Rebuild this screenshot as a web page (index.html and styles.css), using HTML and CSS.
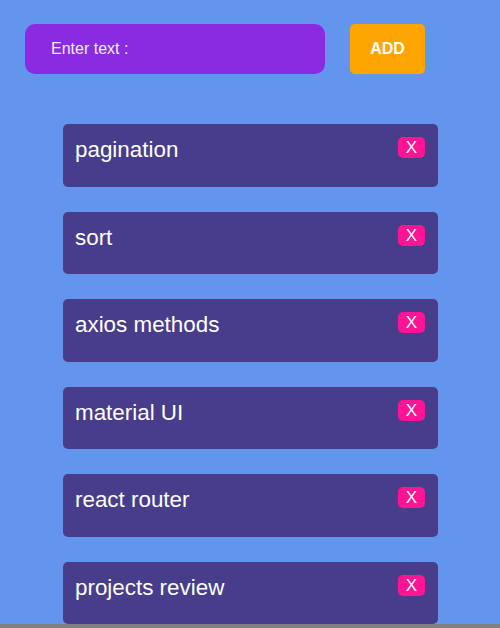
FILE: index.html
```html
<!DOCTYPE html>
<html>
<head>
<meta charset="utf-8">
<link rel="stylesheet" href="styles.css">
</head>
<body>
<div class="page">
  <div class="form">
    <input class="input" type="text" placeholder="Enter text :">
    <button class="add">ADD</button>
  </div>
  <ul class="list">
    <li class="card"><span class="label">pagination</span><button class="del">X</button></li>
    <li class="card"><span class="label">sort</span><button class="del">X</button></li>
    <li class="card"><span class="label">axios methods</span><button class="del">X</button></li>
    <li class="card"><span class="label">material UI</span><button class="del">X</button></li>
    <li class="card"><span class="label">react router</span><button class="del">X</button></li>
    <li class="card"><span class="label">projects review</span><button class="del">X</button></li>
  </ul>
</div>
</body>
</html>
```
FILE: styles.css
```css
html {
  background: #808080;
}
body {
  margin: 0;
  font-family: "Liberation Sans", Arial, sans-serif;
}
.page {
  height: 624px;
  overflow: hidden;
  background: #6495ed;
}
.form {
  display: flex;
  gap: 25px;
  padding: 24px 0 0 25px;
}
.input {
  box-sizing: border-box;
  width: 300px;
  height: 50px;
  border: none;
  border-radius: 10px;
  background: #8a2be2;
  padding: 0 0 0 26px;
  font-family: inherit;
  font-size: 16px;
  color: #eee;
  outline: none;
}
.input::placeholder {
  color: #eeeeee;
  opacity: 1;
}
.add {
  width: 75px;
  height: 50px;
  border: none;
  border-radius: 5px;
  background: #ffa500;
  color: #fff;
  font-family: inherit;
  font-weight: bold;
  font-size: 16px;
  padding: 0;
}
.list {
  list-style: none;
  margin: 50px 0 0 63px;
  padding: 0;
  display: flex;
  flex-direction: column;
  gap: 25px;
}
.card {
  box-sizing: border-box;
  width: 375px;
  height: 62.5px;
  flex-shrink: 0;
  background: #483d8b;
  border-radius: 5px;
  display: flex;
  justify-content: space-between;
  align-items: flex-start;
  padding: 13px 13px 0 12px;
}
.label {
  color: #fff;
  font-size: 22.4px;
  line-height: 25.7px;
}
.del {
  width: 27px;
  height: 21px;
  border: none;
  border-radius: 5px;
  background: #ff1493;
  color: #fff;
  font-family: inherit;
  font-size: 17px;
  padding: 0;
  line-height: 21px;
}
```
